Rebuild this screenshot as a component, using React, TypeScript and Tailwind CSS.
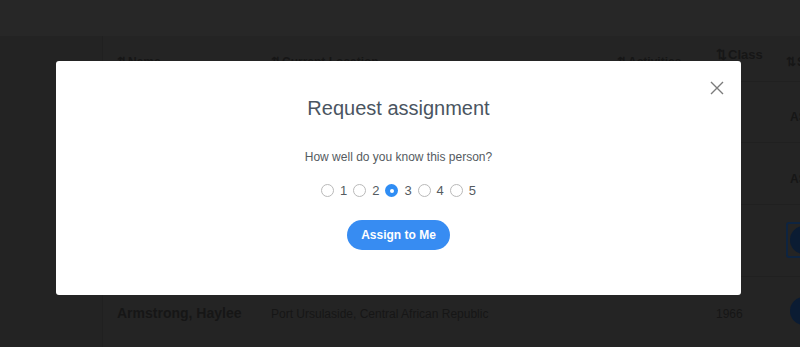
import React from "react";

const SortIcon = () => <span className="mr-[1px]">⇅</span>;

function Radio({ n, checked }: { n: number; checked?: boolean }) {
  return (
    <label className="flex items-center">
      {checked ? (
        <span className="flex h-[13px] w-[13px] items-center justify-center rounded-full bg-[#2f8df4]">
          <span className="h-[4px] w-[4px] rounded-full bg-white" />
        </span>
      ) : (
        <span className="h-[13px] w-[13px] rounded-full border border-[#b9b9b9] bg-white" />
      )}
      <span className="ml-[6px] text-[13px] leading-none text-[#555b61]">{n}</span>
    </label>
  );
}

export default function App() {
  return (
    <div
      className="relative h-[347px] w-[800px] overflow-hidden bg-[#232323]"
      style={{ fontFamily: "'Liberation Sans', Arial, sans-serif" }}
    >
      {/* Background page (dimmed) */}
      <div className="h-[36px] bg-[#272727]" />
      <div className="flex h-[311px]">
        <div className="w-[103px] shrink-0 border-r border-[#202020] bg-[#232323]" />
        <div className="flex-1 overflow-hidden bg-[#242424] text-[#161616]">
          <div className="grid h-[46px] w-[760px] grid-cols-[154px_346px_99px_70px_80px] border-b border-[#202020] pl-[14px] text-[12px] font-bold">
            <div className="pt-[17px]"><SortIcon />Name</div>
            <div className="pt-[17px]"><SortIcon />Current Location</div>
            <div className="pt-[17px]"><SortIcon />Activities</div>
            <div className="pt-[9px] text-[13px]"><SortIcon />Class</div>
            <div className="pt-[17px]"><SortIcon />Status</div>
          </div>
          <div className="grid h-[61px] w-[760px] grid-cols-[154px_346px_99px_70px_80px] border-b border-[#202020] pl-[14px] text-[12px]">
            <div /><div /><div /><div />
            <div className="pt-[26px] pl-[4px] font-bold">ASSIGNED</div>
          </div>
          <div className="grid h-[62px] w-[760px] grid-cols-[154px_346px_99px_70px_80px] border-b border-[#202020] pl-[14px] text-[12px]">
            <div /><div /><div /><div />
            <div className="pt-[27px] pl-[4px] font-bold">ASSIGNED</div>
          </div>
          <div className="grid h-[72px] w-[760px] grid-cols-[154px_346px_99px_70px_80px] border-b border-[#202020] pl-[14px] text-[12px]">
            <div /><div /><div /><div />
            <div className="pt-[17px]">
              <div className="h-[36px] w-[36px] rounded-[3px] border-2 border-[#0e2440] p-[2px]">
                <div className="h-[28px] w-[28px] rounded-full bg-[#0b1c33]" />
              </div>
            </div>
          </div>
          <div className="grid h-[70px] w-[760px] grid-cols-[154px_346px_99px_70px_80px] items-start pl-[14px] text-[12px]">
            <div className="pt-[26px] text-[14px] font-bold">Armstrong, Haylee</div>
            <div className="pt-[28px]">Port Ursulaside, Central African Republic</div>
            <div />
            <div className="pt-[28px]">1966</div>
            <div className="pt-[20px] pl-[4px]">
              <div className="h-[28px] w-[28px] rounded-full bg-[#0b1c33]" />
            </div>
          </div>
        </div>
      </div>

      {/* Modal */}
      <div className="absolute inset-0 flex justify-center pt-[61px]">
        <div className="relative ml-[-3px] h-[234px] w-[685px] rounded-[3px] bg-white">
          <button className="absolute right-[17px] top-[20px] h-[14px] w-[14px] text-[#7b7b7b]">
            <svg viewBox="0 0 14 14" className="h-[14px] w-[14px]" fill="none" stroke="currentColor" strokeWidth="1.4">
              <path d="M1 1L13 13M13 1L1 13" />
            </svg>
          </button>
          <div className="flex flex-col items-center pt-[34px]">
            <h2 className="text-[20px] leading-[26px] text-[#4a5561]">Request assignment</h2>
            <p className="mt-[29px] text-[12px] leading-[14px] text-[#555b61]">How well do you know this person?</p>
            <div className="mt-[20px] flex items-center gap-[6px]">
              <Radio n={1} />
              <Radio n={2} />
              <Radio n={3} checked />
              <Radio n={4} />
              <Radio n={5} />
            </div>
            <button className="mt-[23px] h-[30px] w-[103px] rounded-full bg-[#378cf2] text-[12px] font-bold text-white">
              Assign to Me
            </button>
          </div>
        </div>
      </div>
    </div>
  );
}
